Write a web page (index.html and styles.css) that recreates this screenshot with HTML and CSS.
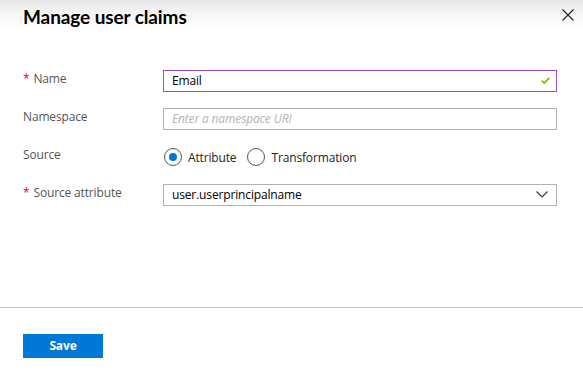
FILE: index.html
```html
<!DOCTYPE html>
<html lang="en">
<head>
    <meta charset="UTF-8">
    <meta name="viewport" content="width=device-width, initial-scale=1.0">
    <title>Manage user claims</title>
    <link rel="stylesheet" href="styles.css">
</head>
<body>
    <div class="dialog">
        <div class="header">
            <h2>Manage user claims</h2>
            <button class="close" aria-label="Close">
                <svg width="12" height="12" viewBox="0 0 12 12"><path d="M0.5 0.5 L11.5 11.5 M11.5 0.5 L0.5 11.5" stroke="#222" stroke-width="1.1" fill="none"/></svg>
            </button>
        </div>

        <div class="form">
            <label class="label"><span class="req">*</span>Name</label>
            <div class="field valid">
                <span class="value">Email</span>
                <svg class="check" width="9" height="7" viewBox="0 0 9 7"><path d="M0.8 3.6 L3.3 6 L8.3 0.8" stroke="#7fba00" stroke-width="1.7" fill="none"/></svg>
            </div>

            <label class="label">Namespace</label>
            <div class="field">
                <span class="placeholder">Enter a namespace URI</span>
            </div>

            <label class="label">Source</label>
            <div class="radios">
                <span class="radio"><span class="circle checked"></span>Attribute</span>
                <span class="radio"><span class="circle"></span>Transformation</span>
            </div>

            <label class="label"><span class="req">*</span>Source attribute</label>
            <div class="field">
                <span class="value">user.userprincipalname</span>
                <svg class="chevron" width="12" height="7" viewBox="0 0 12 7"><path d="M0.5 0.5 L6 6 L11.5 0.5" stroke="#333" stroke-width="1.1" fill="none"/></svg>
            </div>
        </div>

        <div class="footer">
            <button class="boton">Save</button>
        </div>
    </div>
</body>
</html>
```

FILE: styles.css
```css
body {
    margin: 0;
    font-family: "Open Sans", Arial, sans-serif;
    background: white;
    color: #333;
}
.dialog {
    width: 583px;
    height: 382px;
    display: flex;
    flex-direction: column;
}
.header {
    height: 48px;
    display: flex;
    justify-content: space-between;
    align-items: flex-start;
    padding: 0 9px 0 23px;
    background: linear-gradient(#e6e6e6 0px, #f6f6f6 14px, white 30px);
}
.header h2 {
    margin: 5px 0 0;
    font-family: Lato, "Open Sans", sans-serif;
    font-size: 19px;
    font-weight: 700;
    letter-spacing: -0.1px;
    color: #000;
}
.close {
    border: none;
    background: none;
    padding: 0;
    margin-top: 9px;
    width: 12px;
    height: 12px;
    display: flex;
}
.form {
    display: grid;
    grid-template-columns: 140px 394px;
    grid-auto-rows: 22px;
    row-gap: 16px;
    padding: 22px 26px 0 23px;
    height: 260px;
    box-sizing: border-box;
    border-bottom: 1px solid #c8c8c8;
}
.label {
    font-size: 12px;
    color: #555;
    line-height: 18px;
    letter-spacing: -0.15px;
}
.req {
    color: #e00b1c;
    margin-right: 4px;
}
.field {
    border: 1px solid #b2b2b2;
    display: flex;
    align-items: center;
    justify-content: space-between;
    padding: 0 8px 1px 8px;
    font-size: 12px;
    letter-spacing: -0.15px;
    color: #000;
}
.field.valid {
    border-color: #a24ac6;
    padding-right: 6px;
}
.placeholder {
    color: #b4b4b4;
    font-style: italic;
}
.radios {
    display: flex;
    align-items: center;
    gap: 10px;
    font-size: 12px;
    letter-spacing: -0.15px;
    color: #222;
}
.radio {
    display: flex;
    align-items: center;
    gap: 6px;
}
.circle {
    width: 16px;
    height: 16px;
    border: 1px solid #555;
    border-radius: 50%;
    display: flex;
    align-items: center;
    justify-content: center;
    margin-left: 1px;
}
.circle.checked::after {
    content: "";
    width: 8px;
    height: 8px;
    border-radius: 50%;
    background: #0078d7;
}
.footer {
    padding: 25px 23px 0;
}
.boton {
    width: 80px;
    height: 24px;
    border: none;
    background-color: #0078d7;
    color: white;
    font-family: "Open Sans", Arial, sans-serif;
    font-weight: bold;
    font-size: 12px;
    letter-spacing: -0.15px;
    padding: 0;
}
```
